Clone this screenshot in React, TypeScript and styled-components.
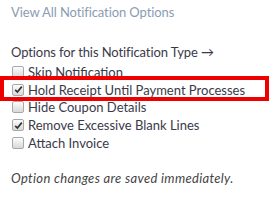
import React from "react";
import styled, { createGlobalStyle } from "styled-components";

const GlobalStyle = createGlobalStyle`
  html, body {
    margin: 0;
    padding: 0;
    background: #ffffff;
  }
  body {
    font-family: Lato, "Open Sans", sans-serif;
    font-size: 13px;
    color: #333;
  }
`;

const Panel = styled.div`
  position: relative;
  width: 279px;
  height: 203px;
  padding: 4px 11px 0 11px;
  box-sizing: border-box;
`;

const ViewAllLink = styled.a`
  display: block;
  color: #8a9cb3;
  text-decoration: none;
  line-height: 16px;
  letter-spacing: -0.1px;
  cursor: pointer;
`;

const Heading = styled.div`
  margin-top: 24px;
  line-height: 16px;
  color: #3a3a4a;
  letter-spacing: -0.1px;
`;

const OptionList = styled.ul`
  list-style: none;
  margin: 3px 0 0 0;
  padding: 0;
  display: flex;
  flex-direction: column;
`;

const OptionRow = styled.li`
  display: flex;
  align-items: center;
  gap: 4px;
  height: 17.8px;
  padding-left: 1px;
`;

const Box = styled.span<{ $checked: boolean }>`
  width: 10px;
  height: 10px;
  border: 1px solid #a9a9a9;
  border-radius: 2px;
  background: linear-gradient(#fdfdfd, #d8d8d8);
  display: flex;
  align-items: center;
  justify-content: center;
  flex: none;
`;

const Label = styled.span`
  color: #3a3a4a;
  letter-spacing: 0;
`;

const Note = styled.p`
  margin: 18.5px 0 0 0;
  font-style: italic;
  color: #444;
  letter-spacing: 0.33px;
  line-height: 16px;
`;

const Highlight = styled.div`
  position: absolute;
  left: 0;
  top: 76px;
  width: 269px;
  height: 25px;
  border: 4px solid #ee0000;
  box-sizing: border-box;
  pointer-events: none;
`;

const options = [
  { label: "Skip Notification", checked: false },
  { label: "Hold Receipt Until Payment Processes", checked: true },
  { label: "Hide Coupon Details", checked: false },
  { label: "Remove Excessive Blank Lines", checked: true },
  { label: "Attach Invoice", checked: false },
];

function Check() {
  return (
    <svg width="9" height="9" viewBox="0 0 9 9">
      <path d="M1.2 4.8 L3.4 7 L7.8 1.6" fill="none" stroke="#333" strokeWidth="1.7" />
    </svg>
  );
}

export default function App() {
  return (
    <>
      <GlobalStyle />
      <Panel>
        <ViewAllLink>View All Notification Options</ViewAllLink>
        <Heading>Options for this Notification Type →</Heading>
        <OptionList>
          {options.map((o) => (
            <OptionRow key={o.label}>
              <Box $checked={o.checked}>{o.checked && <Check />}</Box>
              <Label>{o.label}</Label>
            </OptionRow>
          ))}
        </OptionList>
        <Note>Option changes are saved immediately.</Note>
        <Highlight />
      </Panel>
    </>
  );
}
